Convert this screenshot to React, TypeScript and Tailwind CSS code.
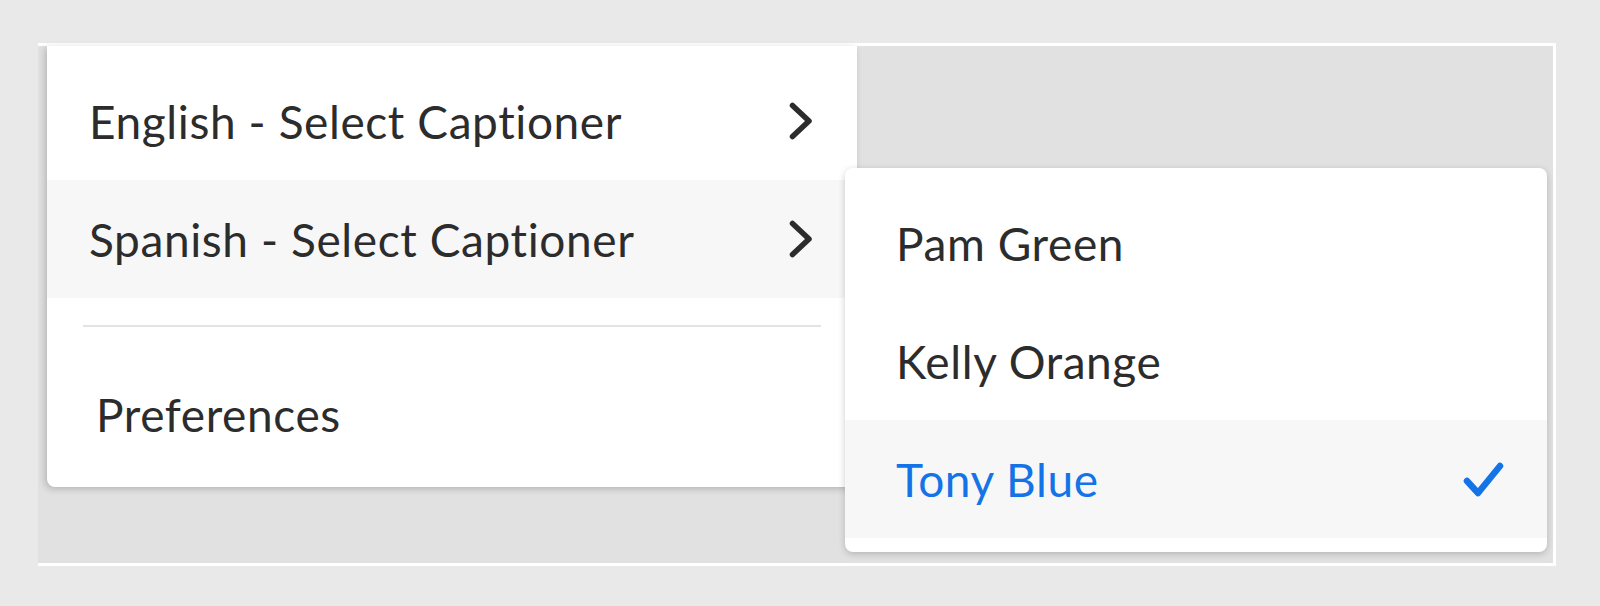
const mainItems = [
  { label: "English - Select Captioner", active: false },
  { label: "Spanish - Select Captioner", active: true },
];

const captioners = [
  { name: "Pam Green", selected: false },
  { name: "Kelly Orange", selected: false },
  { name: "Tony Blue", selected: true },
];

function Chevron() {
  return (
    <svg width="24" height="38" viewBox="0 0 24 38" fill="none" className="shrink-0">
      <path d="M3.5 3.5 L20 19 L3.5 34.5" stroke="#2c2c2c" strokeWidth="5.5" strokeLinecap="round" strokeLinejoin="round" />
    </svg>
  );
}

function Check() {
  return (
    <svg width="42" height="38" viewBox="0 0 42 38" fill="none" className="shrink-0">
      <path d="M5 21 L16 33 L38 6" stroke="#1473e6" strokeWidth="6.5" strokeLinecap="round" strokeLinejoin="round" />
    </svg>
  );
}

export default function App() {
  return (
    <div className="h-[606px] w-[1600px] bg-[#e9e9e9] pl-[38px] pt-[43px] font-['Lato',sans-serif] text-[46px] tracking-[0.6px] text-[#2c2c2c]">
      <div className="relative h-[523px] w-[1518px] border-y-[3px] border-r-[3px] border-white bg-[#e1e1e1]">
        {/* main menu */}
        <div className="ml-[9px] w-[810px] rounded-b-[8px] bg-white pb-[14px] pt-[16px] shadow-[-2px_2px_7px_rgba(0,0,0,0.2)]">
          {mainItems.map((item) => (
            <div
              key={item.label}
              className={`flex h-[118px] items-center justify-between pl-[42px] pr-[44px] ${item.active ? "bg-[#f7f7f7]" : ""}`}
            >
              <span>{item.label}</span>
              <Chevron />
            </div>
          ))}
          <div className="mx-[36px] mt-[27px] h-[2px] bg-[#e3e3e3]" />
          <div className="mt-[28px] flex h-[118px] items-center pl-[49px]">
            <span>Preferences</span>
          </div>
        </div>

        {/* submenu */}
        <div className="absolute left-[807px] top-[122px] w-[702px] rounded-[8px] bg-white pb-[14px] pt-[16px] shadow-[0_2px_7px_rgba(0,0,0,0.2)]">
          {captioners.map((c) => (
            <div
              key={c.name}
              className={`flex h-[118px] items-center justify-between pl-[51px] pr-[43px] ${c.selected ? "bg-[#f7f7f7] text-[#1473e6]" : ""}`}
            >
              <span>{c.name}</span>
              {c.selected && <Check />}
            </div>
          ))}
        </div>
      </div>
    </div>
  );
}
